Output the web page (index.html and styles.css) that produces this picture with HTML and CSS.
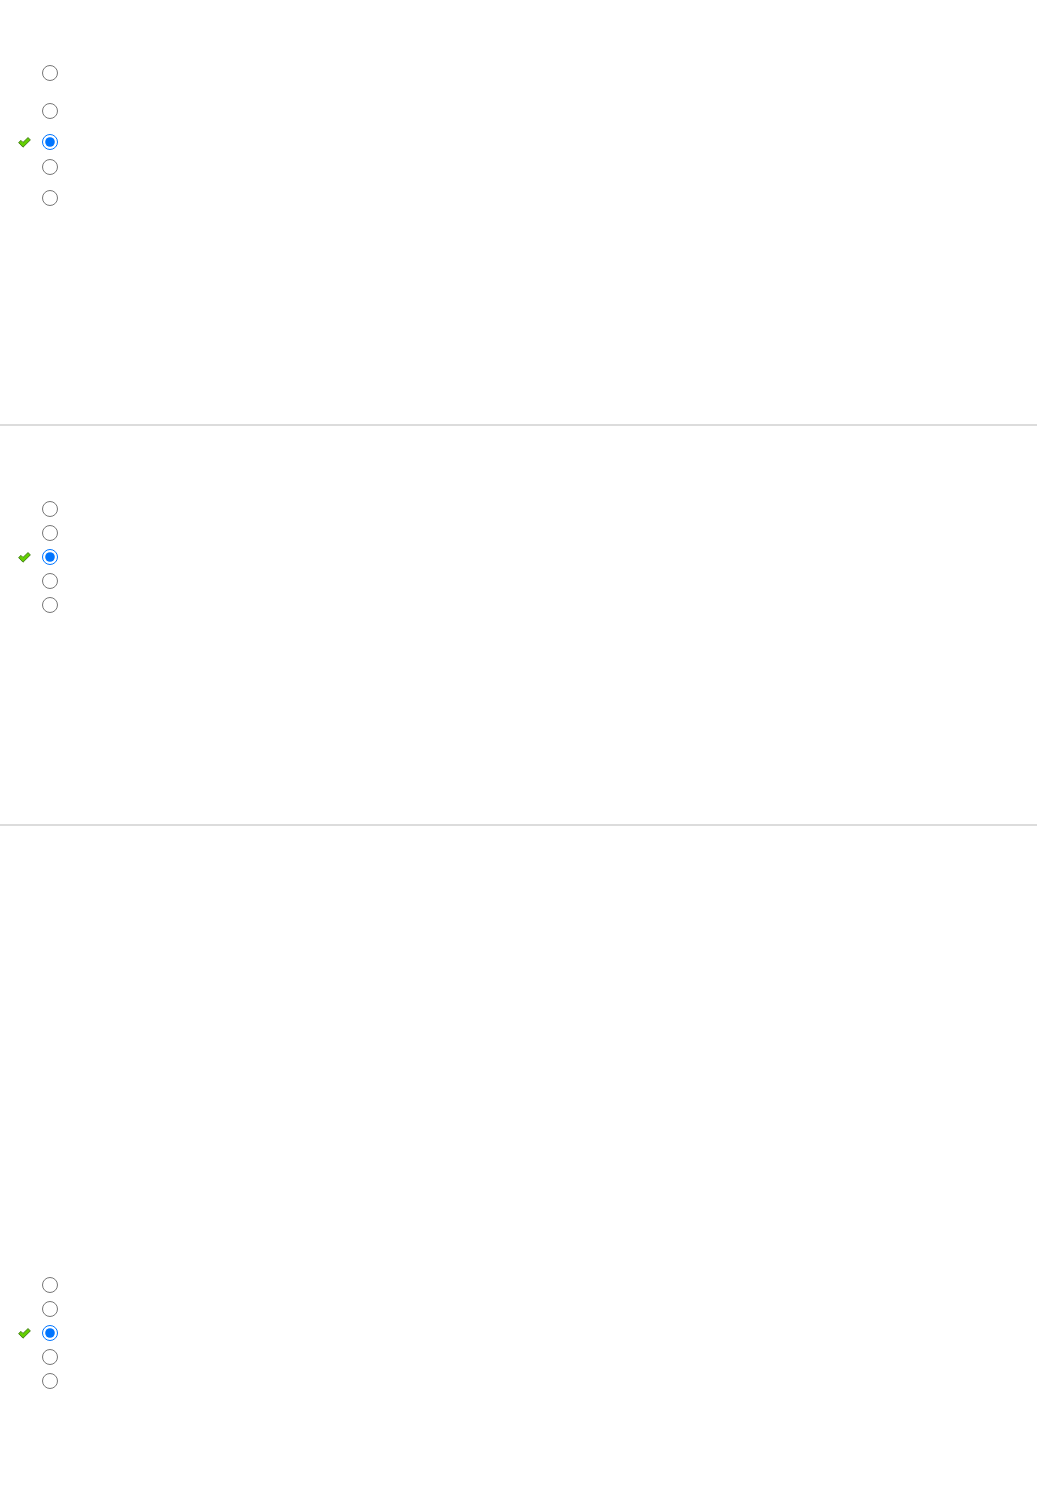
FILE: index.html
```html
<!DOCTYPE html>
<html lang="en">
<head>
  <meta charset="UTF-8" />
  <title>Quiz review</title>
  <link rel="stylesheet" href="styles.css">
</head>
<body>
  <div class="question first">
    <div class="answer"><span class="mark"></span><input type="radio" name="q1" /></div>
    <div class="answer gap-lg"><span class="mark"></span><input type="radio" name="q1" /></div>
    <div class="answer gap-md"><span class="mark"><svg width="13" height="11" viewBox="0 0 13 11"><polygon points="0.6,5.6 3,3.4 5,5.4 10,0.6 12.4,2.9 5,10.2" fill="#63d000" stroke="#3d7514" stroke-width="0.9" stroke-linejoin="round"/></svg></span><input type="radio" name="q1" checked /></div>
    <div class="answer gap-sm"><span class="mark"></span><input type="radio" name="q1" /></div>
    <div class="answer gap-md"><span class="mark"></span><input type="radio" name="q1" /></div>
  </div>

  <div class="question second">
    <div class="answer"><span class="mark"></span><input type="radio" name="q2" /></div>
    <div class="answer"><span class="mark"></span><input type="radio" name="q2" /></div>
    <div class="answer"><span class="mark"><svg width="13" height="11" viewBox="0 0 13 11"><polygon points="0.6,5.6 3,3.4 5,5.4 10,0.6 12.4,2.9 5,10.2" fill="#63d000" stroke="#3d7514" stroke-width="0.9" stroke-linejoin="round"/></svg></span><input type="radio" name="q2" checked /></div>
    <div class="answer"><span class="mark"></span><input type="radio" name="q2" /></div>
    <div class="answer"><span class="mark"></span><input type="radio" name="q2" /></div>
  </div>

  <div class="question third">
    <div class="answer"><span class="mark"></span><input type="radio" name="q3" /></div>
    <div class="answer"><span class="mark"></span><input type="radio" name="q3" /></div>
    <div class="answer"><span class="mark"><svg width="13" height="11" viewBox="0 0 13 11"><polygon points="0.6,5.6 3,3.4 5,5.4 10,0.6 12.4,2.9 5,10.2" fill="#63d000" stroke="#3d7514" stroke-width="0.9" stroke-linejoin="round"/></svg></span><input type="radio" name="q3" checked /></div>
    <div class="answer"><span class="mark"></span><input type="radio" name="q3" /></div>
    <div class="answer"><span class="mark"></span><input type="radio" name="q3" /></div>
  </div>
</body>
</html>
```

FILE: styles.css
```css
body {
  margin: 0;
  font-family: "Liberation Sans", Arial, sans-serif;
  background: #fff;
}
.question {
  box-sizing: border-box;
  border-bottom: 2px solid #dcdcdc;
}
.question.first {
  height: 426px;
  padding-top: 61px;
}
.question.second {
  height: 400px;
  padding-top: 71px;
}
.question.third {
  border-bottom: none;
  padding-top: 447px;
  height: 674px;
}
.answer {
  height: 24px;
  display: flex;
  align-items: center;
  padding-left: 18px;
}
.gap-lg { margin-top: 14px; }
.gap-md { margin-top: 7px; }
.gap-sm { margin-top: 1px; }
.mark {
  width: 13px;
  height: 11px;
  margin-right: 11px;
  display: flex;
}
.answer input {
  width: 16px;
  height: 16px;
  margin: 0;
}
```
